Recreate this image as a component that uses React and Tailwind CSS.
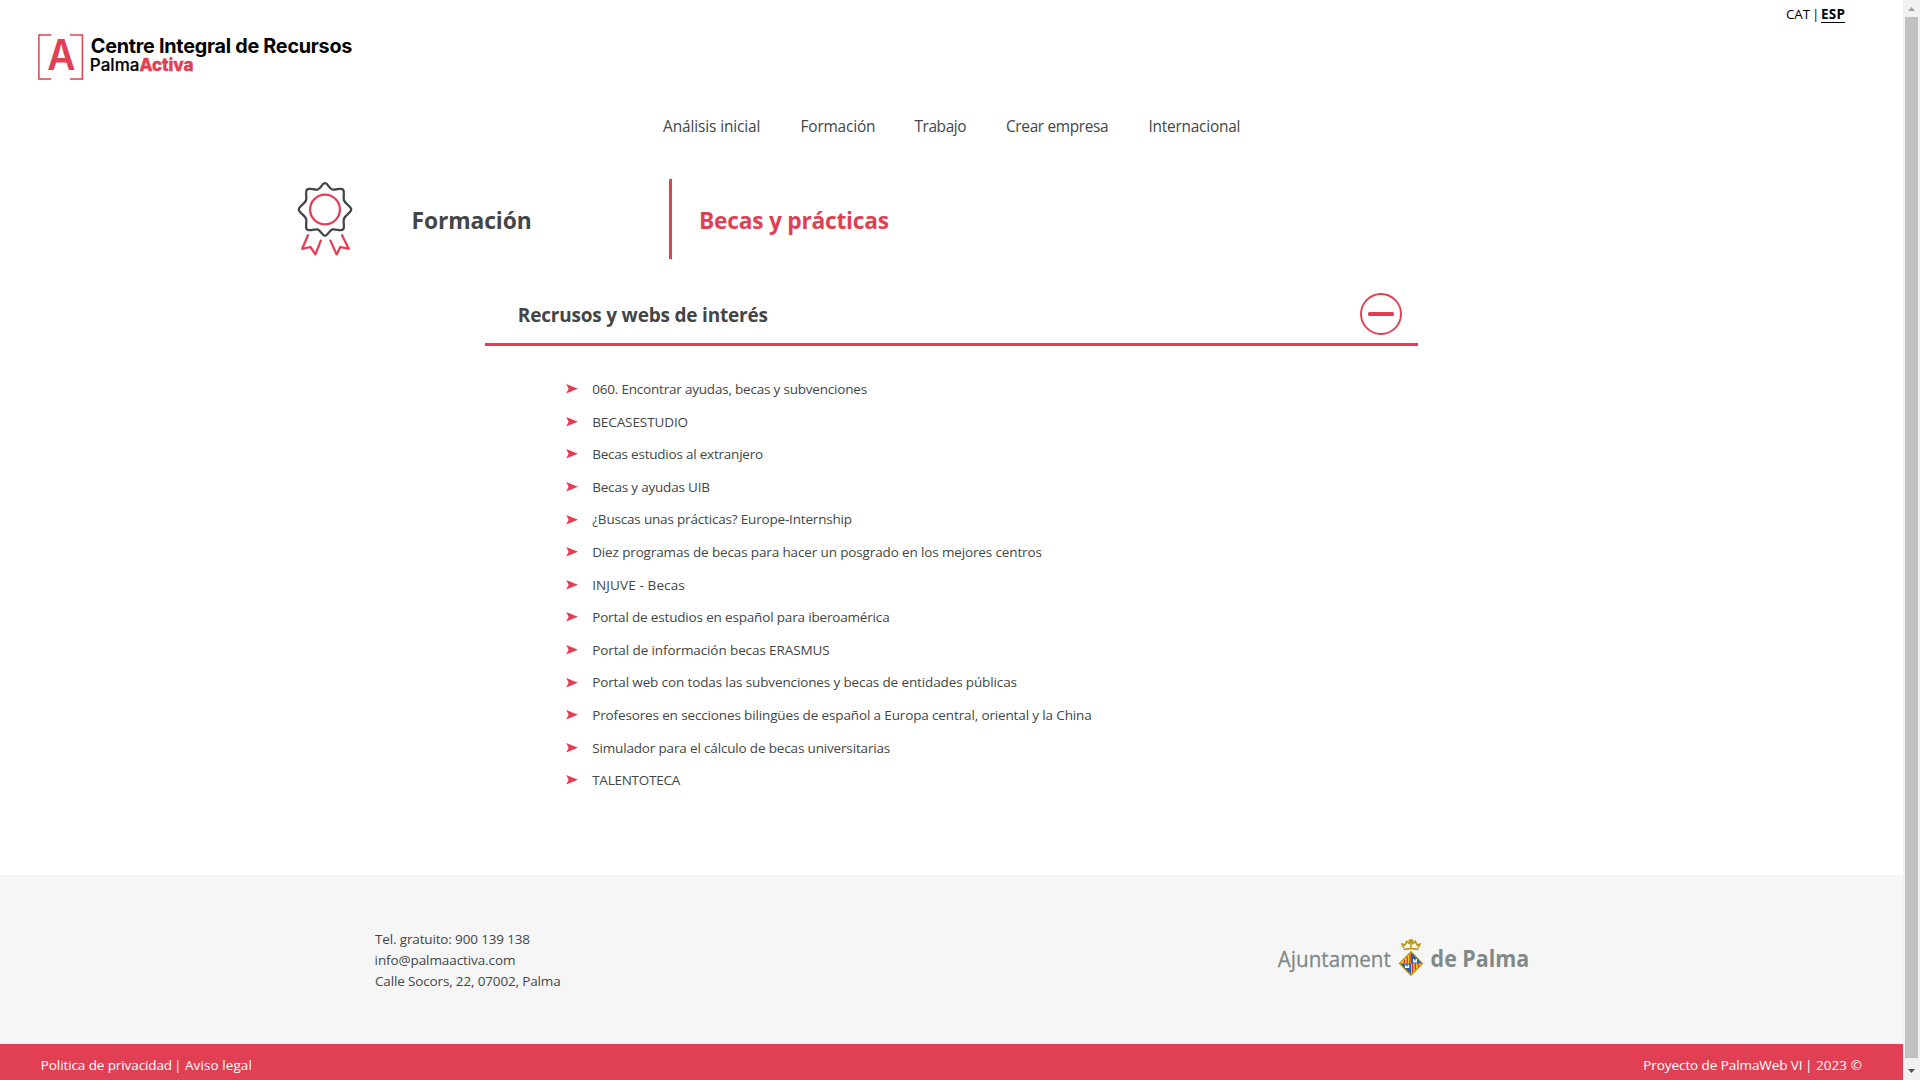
import React from "react";

const NAV = [
  { label: "Análisis inicial", cls: "w-[137.5px] tracking-[-0.1px]" },
  { label: "Formación", cls: "w-[114px] tracking-[-0.16px]" },
  { label: "Trabajo", cls: "w-[91.5px] tracking-[-0.4px]" },
  { label: "Crear empresa", cls: "w-[142.5px] tracking-[-0.33px]" },
  { label: "Internacional", cls: "tracking-[-0.22px]" },
];

const LINKS = [
  { label: "060. Encontrar ayudas, becas y subvenciones", cls: "tracking-[-0.2px]" },
  { label: "BECASESTUDIO", cls: "tracking-[-0.09px]" },
  { label: "Becas estudios al extranjero", cls: "tracking-[-0.22px]" },
  { label: "Becas y ayudas UIB", cls: "tracking-[-0.19px]" },
  { label: "¿Buscas unas prácticas? Europe-Internship", cls: "tracking-[-0.18px]" },
  { label: "Diez programas de becas para hacer un posgrado en los mejores centros", cls: "tracking-[-0.135px]" },
  { label: "INJUVE - Becas", cls: "tracking-[0.12px]" },
  { label: "Portal de estudios en español para iberoamérica", cls: "tracking-[-0.17px]" },
  { label: "Portal de información becas ERASMUS", cls: "tracking-[-0.1px]" },
  { label: "Portal web con todas las subvenciones y becas de entidades públicas", cls: "tracking-[-0.125px]" },
  { label: "Profesores en secciones bilingües de español a Europa central, oriental y la China", cls: "tracking-[-0.135px]" },
  { label: "Simulador para el cálculo de becas universitarias", cls: "tracking-[-0.16px]" },
  { label: "TALENTOTECA", cls: "tracking-[-0.25px]" },
];

function Logo() {
  return (
    <svg width="330" height="60" viewBox="0 0 330 60" className="block overflow-visible font-['Inter',sans-serif]">
      <g fill="none" stroke="#e13f54" strokeWidth="1.5">
        <path d="M13 .9H.9V45.1H13" />
        <path d="M32 .9H44.4V45.1H32" />
      </g>
      <text x="9.2" y="36" fontSize="43" fontWeight="600" fill="#e13f54" textLength="28.2" lengthAdjust="spacingAndGlyphs">A</text>
      <text x="52.8" y="18.7" fontSize="19.8" fontWeight="700" fill="#000" textLength="261.6" lengthAdjust="spacing">Centre Integral de Recursos</text>
      <text x="51.8" y="36.7" fontSize="17" fontWeight="500" fill="#000" stroke="#000" strokeWidth=".2" textLength="49.6" lengthAdjust="spacing">Palma</text>
      <text x="101.6" y="36.7" fontSize="17" fontWeight="800" fill="#e13f54" stroke="#e13f54" strokeWidth=".4" textLength="53.8" lengthAdjust="spacing">Activa</text>
    </svg>
  );
}

function Rosette() {
  return (
    <svg width="56" height="76" viewBox="0 0 56 76" fill="none" strokeWidth="2.3" strokeLinecap="round" strokeLinejoin="round" className="block">
      <path stroke="#434645" d="M28 2.2C31 2.2 32 7.8 35.5 8.6C39 9.4 44 6 46.2 8.8C48.2 11.4 45.6 16 47 19.5C48.2 22.6 54.2 25.5 54.2 28.5C54.2 31.5 48.2 34.4 47 37.5C45.6 41 48.2 45.6 46.2 48.2C44 51 39 47.6 35.5 48.4C32 49.2 31 54.8 28 54.8C25 54.8 24 49.2 20.5 48.4C17 47.6 12 51 9.8 48.2C7.8 45.6 10.4 41 9 37.5C7.8 34.4 1.8 31.5 1.8 28.5C1.8 25.5 7.8 22.6 9 19.5C10.4 16 7.8 11.4 9.8 8.8C12 6 17 9.4 20.5 8.6C24 7.8 25 2.2 28 2.2Z" />
      <circle stroke="#e13f54" cx="28" cy="28.5" r="14.9" />
      <path stroke="#e13f54" d="M11 54.2L5.2 67.8L13.4 66L18.4 73.4L23.8 59.6" />
      <path stroke="#e13f54" d="M45 54.2L51.8 67.8L43.4 66L39.6 73.4L33.4 59.6" />
    </svg>
  );
}

function CouncilLogo() {
  return (
    <svg width="260" height="50" viewBox="0 0 260 50" className="block overflow-visible font-['Open_Sans',sans-serif]">
      <text x="1.8" y="30.4" fontSize="22.6" fill="#7f8a88" stroke="#7f8a88" strokeWidth=".3" textLength="113" lengthAdjust="spacingAndGlyphs">Ajuntament</text>
      <text x="154.6" y="30.4" fontSize="22.6" fontWeight="700" fill="#7f8a88" textLength="98.6" lengthAdjust="spacingAndGlyphs">de Palma</text>
      <g transform="translate(1 .6)">
        <g fill="none" stroke="#b9980f" strokeWidth="1.6">
          <path d="M126.5 12C131 10.8 137 10.8 141.5 12" />
          <path d="M127 10.4L125 6.5L128.2 7.2L129.6 3.8L132 6L134 2.4L136 6L138.4 3.8L139.8 7.2L143 6.5L141 10.4" />
          <path d="M134 2V10M131.4 3H136.6" />
        </g>
        <path d="M134 14L145.5 25.8L134 37.6L122.5 25.8Z" fill="#f5c72c" />
        <path d="M127.4 22V26M130.2 19V26M133 16V26" stroke="#d8262f" strokeWidth="1.2" />
        <path d="M134 14L145.5 26H134Z" fill="#2b5ea8" />
        <path d="M136 24.8V21.5H137.3V23H138.6V21.5H140V24.8Z" fill="#fff" />
        <path d="M122.5 26H134V37.6Z" fill="#2b5ea8" />
        <path d="M128 30.5V27.2H129.3V28.6H130.8V27.2H132.2V30.5Z" fill="#fff" />
        <path d="M135.6 26V35M138.4 26V32.4M141.2 26V29.6" stroke="#d8262f" strokeWidth="1.2" />
        <path d="M134 14L145.5 25.8L134 37.6L122.5 25.8Z" fill="none" stroke="#b9980f" strokeWidth="1.3" />
      </g>
    </svg>
  );
}

export default function App() {
  return (
    <div className="flex h-[1080px] w-[1920px] overflow-hidden bg-white font-['Open_Sans',sans-serif] text-[#434645]">
      <div className="flex w-[1903px] flex-col">
        <header className="flex h-[160px] flex-col">
          <div className="flex h-[34px] items-start justify-end pr-[58px] pt-[5px] text-[13.5px] leading-[19px] text-black">
            <span className="w-[26px] tracking-[-0.2px]">CAT</span>
            <span className="w-[9px]">|</span>
            <span className="h-[18px] w-[24px] border-b border-black font-bold tracking-[0.2px]">ESP</span>
          </div>
          <div className="h-[80px] pl-[38px]">
            <Logo />
          </div>
          <nav className="flex pl-[663px] pt-px text-[15.4px] leading-6">
            {NAV.map((n) => (
              <a key={n.label} className={n.cls}>{n.label}</a>
            ))}
          </nav>
        </header>

        <main className="flex h-[715px] flex-col">
          <section className="flex h-[119px] items-start pl-[297px] pt-[19px] font-bold text-[22.8px]">
            <div className="pt-[2px]"><Rosette /></div>
            <h1 className="ml-[58.6px] w-[257.4px] pt-[25px] leading-[34px] tracking-[-0.1px]">Formación</h1>
            <div className="h-20 w-[3px] bg-[#e13f54]" />
            <h2 className="pl-[27px] pt-[25px] leading-[34px] tracking-[-0.27px] text-[#e13f54]">Becas y prácticas</h2>
          </section>

          <section className="ml-[485px] flex w-[933px] flex-col">
            <div className="flex h-[67px] justify-between border-b-[3px] border-[#e13f54] pl-[32.8px] pr-4">
              <h3 className="pt-[22px] text-[19px] font-bold leading-[28px] tracking-[-0.2px]">Recrusos y webs de interés</h3>
              <svg width="42" height="42" viewBox="0 0 42 42" className="mt-[14px]">
                <circle cx="21" cy="21" r="20" fill="none" stroke="#e13f54" strokeWidth="1.9" />
                <rect x="8" y="19" width="26" height="4" rx="1.6" fill="#e13f54" />
              </svg>
            </div>
            <ul className="mt-[26.9px] pl-[81px] text-[13.5px]">
              {LINKS.map((l) => (
                <li key={l.label} className="flex h-[32.6px] items-center">
                  <svg width="12" height="10" viewBox="0 0 12 10" className="mr-[14.2px]">
                    <path d="M.2 0L12 4.8L.2 9.6L2.6 4.8Z" fill="#e13f54" />
                  </svg>
                  <a className={l.cls}>{l.label}</a>
                </li>
              ))}
            </ul>
          </section>
        </main>

        <footer className="flex flex-col">
          <div className="flex h-[169px] items-start justify-between bg-[#f6f6f6] pl-[375px] pr-[367px]">
            <div className="pt-[53.5px] text-[13.5px] leading-[21px]">
              <p className="tracking-[-0.15px]">Tel. gratuito: 900 139 138</p>
              <p className="-ml-[0.4px] tracking-[-0.1px]">info@palmaactiva.com</p>
              <p className="tracking-[-0.15px]">Calle Socors, 22, 07002, Palma</p>
            </div>
            <div className="h-[120px] pt-[62px]"><CouncilLogo /></div>
          </div>
          <div className="flex h-9 justify-between bg-[#e13f54] pl-[40.8px] pr-[41px] pt-[11px] text-[13.5px] leading-[21px] text-white">
            <div className="flex">
              <span className="w-[133.2px] tracking-[-0.1px]">Politica de privacidad</span>
              <span className="w-[11px]">|</span>
              <span className="tracking-[0.09px]">Aviso legal</span>
            </div>
            <div className="flex">
              <span className="w-[161.6px] tracking-[-0.08px]">Proyecto de PalmaWeb VI</span>
              <span className="w-[11px]">|</span>
              <span className="tracking-[0.08px]">2023 ©</span>
            </div>
          </div>
        </footer>
      </div>

      <div className="flex w-[17px] flex-col items-center justify-between bg-[#f1f1f1]">
        <svg width="17" height="17" viewBox="0 0 17 17"><path d="M5 11L8.5 7L12 11Z" fill="#a3a3a3" /></svg>
        <div className="w-[13px] flex-1 bg-[#c1c1c1]" />
        <svg width="17" height="22" viewBox="0 0 17 22"><path d="M5 11L8.5 15L12 11Z" fill="#505050" /></svg>
      </div>
    </div>
  );
}
